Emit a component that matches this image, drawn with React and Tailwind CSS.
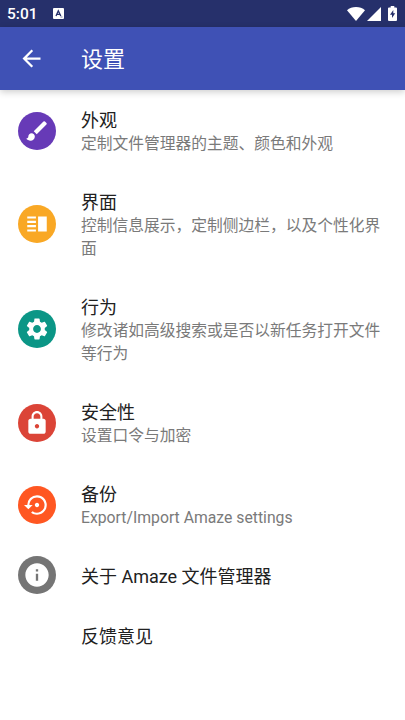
import {
    MdArrowBack,
    MdBrush,
    MdInfo,
    MdLock,
    MdSettings,
    MdSettingsBackupRestore,
    MdVerticalSplit,
} from 'react-icons/md'

const items = [
    { title: '外观', summary: '定制文件管理器的主题、颜色和外观', icon: MdBrush, color: 'bg-[#673ab7]' },
    { title: '界面', summary: '控制信息展示，定制侧边栏，以及个性化界面', icon: MdVerticalSplit, color: 'bg-[#f9a825]' },
    { title: '行为', summary: '修改诸如高级搜索或是否以新任务打开文件等行为', icon: MdSettings, color: 'bg-[#0b9686]' },
    { title: '安全性', summary: '设置口令与加密', icon: MdLock, color: 'bg-[#db4437]' },
    { title: '备份', summary: 'Export/Import Amaze settings', icon: MdSettingsBackupRestore, color: 'bg-[#ff5722]' },
    { title: '关于 Amaze 文件管理器', icon: MdInfo, color: 'bg-[#757575]' },
    { title: '反馈意见' },
]

function StatusBar() {
    return (
        <div className="flex h-[27px] items-center bg-[#26306b] pl-[7px] pr-[8px] text-white">
            <span className="w-[46px] pt-[2px] text-[15.5px] font-medium leading-none">5:01</span>
            {/* Keyboard notification */}
            <svg className="h-[11px] w-[11px]" viewBox="0 0 11 11">
                <rect width="11" height="11" rx="1" fill="#fff" />
                <path d="M3 8 5.3 2.8 7.8 8M3.8 6.3h3" fill="none" stroke="#26306b" strokeWidth="1.3" />
                <path d="M7.5 9h2" stroke="#26306b" strokeWidth=".6" />
            </svg>
            <div className="ml-auto flex items-center">
                <svg className="h-[14px] w-[18px]" viewBox="0 0 18 14" fill="#fff">
                    <path d="M9 14 0 3.2C2.4 1.2 5.5 0 9 0s6.600 1.200 9 3.200z" />
                </svg>
                <svg className="ml-[2px] h-[14px] w-[14px]" viewBox="0 0 14 14" fill="#fff">
                    <path d="M14 0v14H0z" />
                </svg>
                <svg className="ml-[7px] h-[15px] w-[9px]" viewBox="0 0 9 15">
                    <path d="M2.700 0h3.600v1.500H8q1 0 1 1V14q0 1-1 1H1q-1 0-1-1V2.500q0-1 1-1h1.700z" fill="#fff" />
                    <path d="M5.300 4 2 8.700h2V12l3.200-4.700H5.300z" fill="#26306b" />
                </svg>
            </div>
        </div>
    )
}

function SettingsRow({ title, summary, icon: Icon, color }) {
    return (
        <li className={summary ? 'flex items-center py-[17px]' : 'flex h-[60px] items-center'}>
            <div className={summary ? 'w-[81px] shrink-0 pb-px pl-[18px]' : 'w-[81px] shrink-0 pb-[2px] pl-[18px]'}>
                {Icon && (
                    <div className={`flex size-[38px] items-center justify-center rounded-full ${color}`}>
                        <Icon className={summary ? 'size-[26px] text-white' : 'size-[28px] text-white'} />
                    </div>
                )}
            </div>
            <div className={summary ? 'w-[308px] pt-[2px]' : 'w-[308px]'}>
                <h2 className="text-[18px] leading-[23px] text-[#212121]">{title}</h2>
                {summary && <p className="text-[15.75px] leading-[23px] text-[#7a7a7a]">{summary}</p>}
            </div>
        </li>
    )
}

export default function App() {
    return (
        <div className="h-[720px] overflow-hidden bg-white font-[Roboto,'Noto_Sans_CJK_SC',sans-serif]">
            <StatusBar />
            <header className="flex h-[63px] items-center bg-[#3f51b5] pl-[18px] text-white shadow-[0_2px_7px_rgba(0,0,0,0.2)]">
                <MdArrowBack className="size-[27px]" />
                <h1 className="ml-[36px] pt-[2px] text-[22px] leading-none">设置</h1>
            </header>
            <ul>
                {items.map((item) => (
                    <SettingsRow key={item.title} {...item} />
                ))}
            </ul>
        </div>
    )
}
